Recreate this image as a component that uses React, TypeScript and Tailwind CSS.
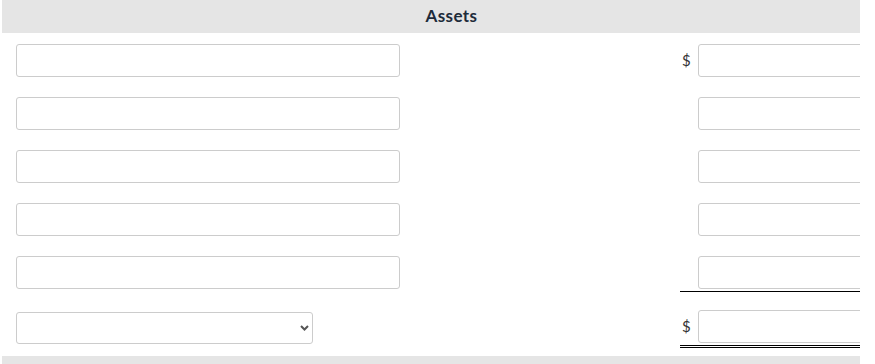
import React from 'react';

const inputCls = 'h-[33px] border border-[#cccccc] rounded-[3px] bg-white outline-none';

function AmountCell({ dollar, line }: { dollar?: boolean; line?: 'single' | 'double' }) {
  const lineCls =
    line === 'single'
      ? 'border-b border-black pb-[2px]'
      : line === 'double'
        ? 'border-b-[3px] border-double border-black pb-[2px]'
        : '';
  return (
    <div className={`flex items-center w-[180px] shrink-0 overflow-hidden ${lineCls}`}>
      <span className="w-[18px] shrink-0 pl-[2px] text-[15px] text-[#333] leading-none">{dollar ? '$' : ''}</span>
      <input type="text" className={`${inputCls} w-[220px] shrink-0`} />
    </div>
  );
}

export default function App() {
  const rows = [true, false, false, false, false];
  return (
    <div className="w-[875px] h-[364px] bg-white overflow-hidden" style={{ fontFamily: 'Lato, "Liberation Sans", sans-serif' }}>
      <div className="ml-[2px] w-[858px] overflow-hidden">
        <div className="h-[33px] bg-[#e5e5e5] flex items-center justify-center pl-[41px] pb-[3px]">
          <span className="text-[17px] font-bold tracking-[0.4px] text-[#1d2b3a] leading-none">Assets</span>
        </div>
        <div className="pt-[11px] flex flex-col gap-[20px]">
          {rows.map((dollar, i) => (
            <div key={i} className="flex items-start">
              <div className="pl-[14px]">
                <input type="text" className={`${inputCls} w-[384px] block`} />
              </div>
              <div className="flex-1" />
              <AmountCell dollar={dollar} line={i === 4 ? 'single' : undefined} />
            </div>
          ))}
        </div>
        <div className="mt-[18px] flex items-start">
          <div className="pl-[14px] pt-[2px] relative">
            <select className="h-[32px] w-[297px] border border-[#cccccc] rounded-[3px] bg-white appearance-none block outline-none" />
            <svg className="absolute left-[298px] top-[15px]" width="9" height="6" viewBox="0 0 9 6" fill="none">
              <path d="M1 1l3.5 3.5L8 1" stroke="#555" strokeWidth="2" />
            </svg>
          </div>
          <div className="flex-1" />
          <AmountCell dollar line="double" />
        </div>
        <div className="mt-[8px] h-[12px] bg-[#e5e5e5]" />
      </div>
    </div>
  );
}
